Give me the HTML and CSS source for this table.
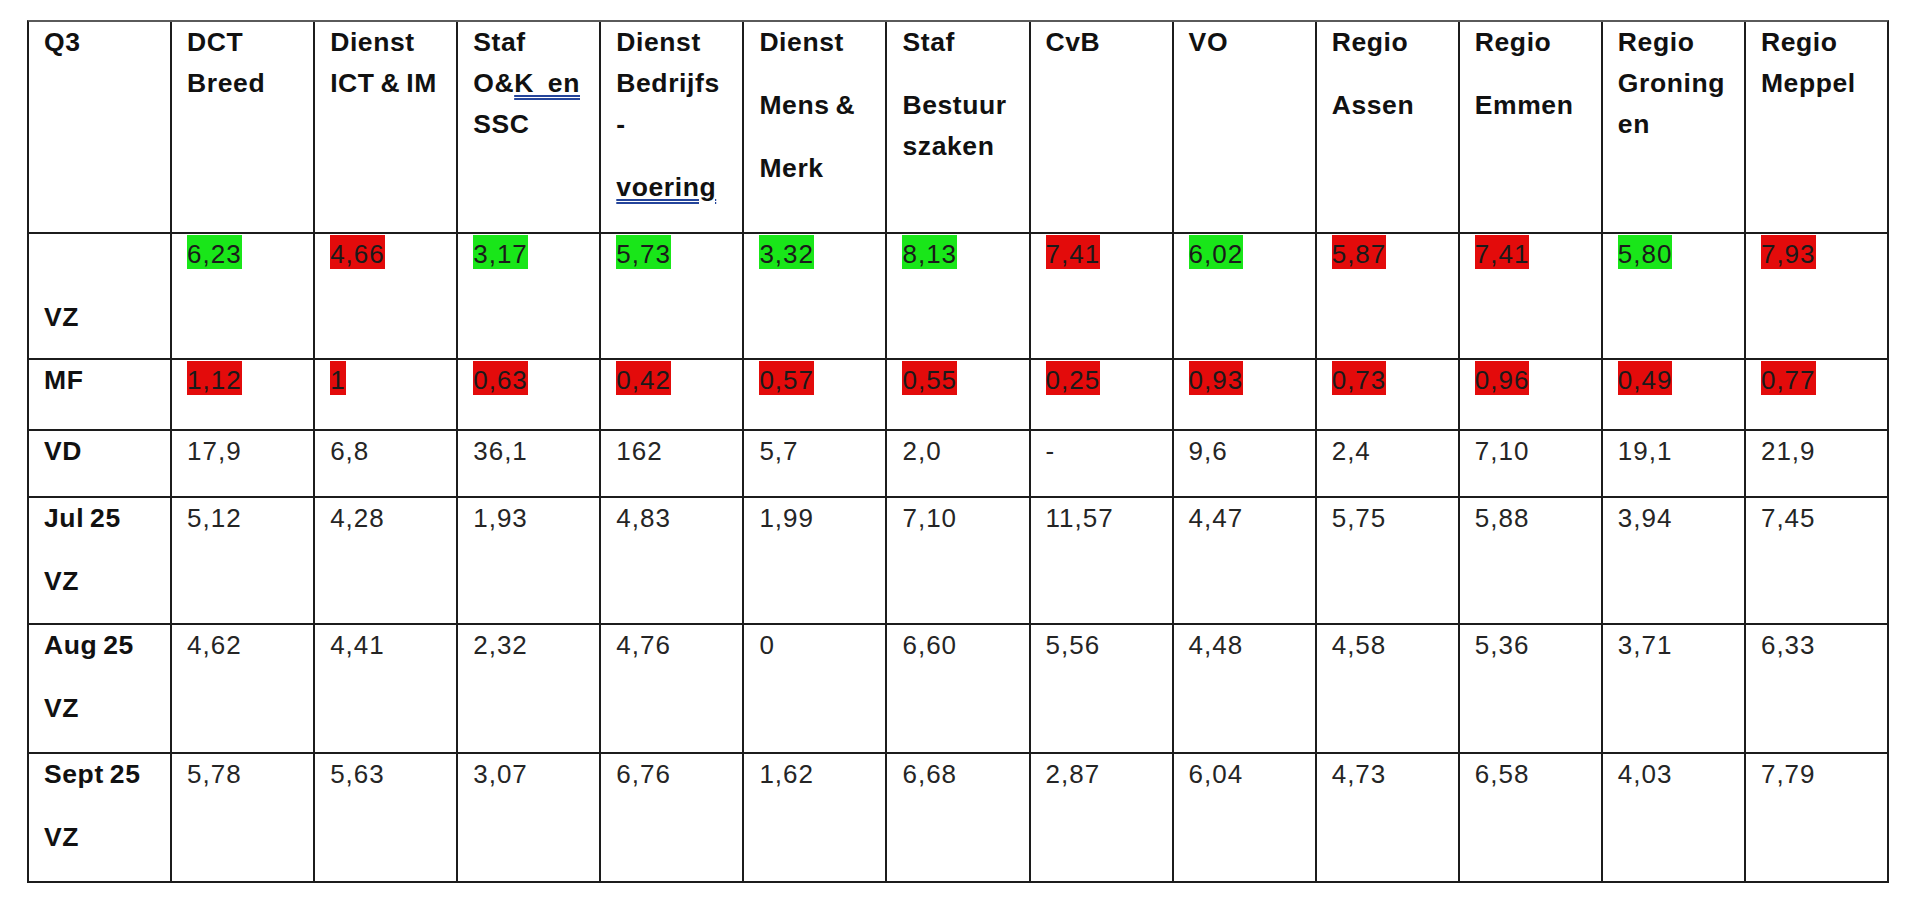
FILE: index.html
```html
<!DOCTYPE html>
<html lang="nl">
<head>
<meta charset="utf-8">
<title>Q3 overzicht</title>
<link rel="stylesheet" href="styles.css">
</head>
<body>
<div class="sheet">
  <!-- header row -->
  <div class="c h"><p>Q3</p></div>
  <div class="c h"><p>DCT<br>Breed</p></div>
  <div class="c h"><p>Dienst<br>ICT &amp; IM</p></div>
  <div class="c h"><p>Staf<br>O&amp;<u class="wide">K en</u><br>SSC</p></div>
  <div class="c h"><p>Dienst<br>Bedrijfs<br>-</p><p><u>voering</u></p></div>
  <div class="c h"><p>Dienst</p><p>Mens &amp;</p><p>Merk</p></div>
  <div class="c h"><p>Staf</p><p>Bestuur<br>szaken</p></div>
  <div class="c h"><p>CvB</p></div>
  <div class="c h"><p>VO</p></div>
  <div class="c h"><p>Regio</p><p>Assen</p></div>
  <div class="c h"><p>Regio</p><p>Emmen</p></div>
  <div class="c h"><p>Regio<br>Groning<br>en</p></div>
  <div class="c h"><p>Regio<br>Meppel</p></div>

  <!-- VZ row -->
  <div class="c h"><p>&nbsp;</p><p>VZ</p></div>
  <div class="c"><p><span class="hl g">6,23</span></p></div>
  <div class="c"><p><span class="hl r">4,66</span></p></div>
  <div class="c"><p><span class="hl g">3,17</span></p></div>
  <div class="c"><p><span class="hl g">5,73</span></p></div>
  <div class="c"><p><span class="hl g">3,32</span></p></div>
  <div class="c"><p><span class="hl g">8,13</span></p></div>
  <div class="c"><p><span class="hl r">7,41</span></p></div>
  <div class="c"><p><span class="hl g">6,02</span></p></div>
  <div class="c"><p><span class="hl r">5,87</span></p></div>
  <div class="c"><p><span class="hl r">7,41</span></p></div>
  <div class="c"><p><span class="hl g">5,80</span></p></div>
  <div class="c"><p><span class="hl r">7,93</span></p></div>

  <!-- MF row -->
  <div class="c h"><p>MF</p></div>
  <div class="c"><p><span class="hl r">1,12</span></p></div>
  <div class="c"><p><span class="hl r">1</span></p></div>
  <div class="c"><p><span class="hl r">0,63</span></p></div>
  <div class="c"><p><span class="hl r">0,42</span></p></div>
  <div class="c"><p><span class="hl r">0,57</span></p></div>
  <div class="c"><p><span class="hl r">0,55</span></p></div>
  <div class="c"><p><span class="hl r">0,25</span></p></div>
  <div class="c"><p><span class="hl r">0,93</span></p></div>
  <div class="c"><p><span class="hl r">0,73</span></p></div>
  <div class="c"><p><span class="hl r">0,96</span></p></div>
  <div class="c"><p><span class="hl r">0,49</span></p></div>
  <div class="c"><p><span class="hl r">0,77</span></p></div>

  <!-- VD row -->
  <div class="c h"><p>VD</p></div>
  <div class="c"><p>17,9</p></div>
  <div class="c"><p>6,8</p></div>
  <div class="c"><p>36,1</p></div>
  <div class="c"><p>162</p></div>
  <div class="c"><p>5,7</p></div>
  <div class="c"><p>2,0</p></div>
  <div class="c"><p>-</p></div>
  <div class="c"><p>9,6</p></div>
  <div class="c"><p>2,4</p></div>
  <div class="c"><p>7,10</p></div>
  <div class="c"><p>19,1</p></div>
  <div class="c"><p>21,9</p></div>

  <!-- Jul 25 row -->
  <div class="c h"><p>Jul 25</p><p>VZ</p></div>
  <div class="c"><p>5,12</p></div>
  <div class="c"><p>4,28</p></div>
  <div class="c"><p>1,93</p></div>
  <div class="c"><p>4,83</p></div>
  <div class="c"><p>1,99</p></div>
  <div class="c"><p>7,10</p></div>
  <div class="c"><p>11,57</p></div>
  <div class="c"><p>4,47</p></div>
  <div class="c"><p>5,75</p></div>
  <div class="c"><p>5,88</p></div>
  <div class="c"><p>3,94</p></div>
  <div class="c"><p>7,45</p></div>

  <!-- Aug 25 row -->
  <div class="c h"><p>Aug 25</p><p>VZ</p></div>
  <div class="c"><p>4,62</p></div>
  <div class="c"><p>4,41</p></div>
  <div class="c"><p>2,32</p></div>
  <div class="c"><p>4,76</p></div>
  <div class="c"><p>0</p></div>
  <div class="c"><p>6,60</p></div>
  <div class="c"><p>5,56</p></div>
  <div class="c"><p>4,48</p></div>
  <div class="c"><p>4,58</p></div>
  <div class="c"><p>5,36</p></div>
  <div class="c"><p>3,71</p></div>
  <div class="c"><p>6,33</p></div>

  <!-- Sept 25 row -->
  <div class="c h"><p>Sept 25</p><p>VZ</p></div>
  <div class="c"><p>5,78</p></div>
  <div class="c"><p>5,63</p></div>
  <div class="c"><p>3,07</p></div>
  <div class="c"><p>6,76</p></div>
  <div class="c"><p>1,62</p></div>
  <div class="c"><p>6,68</p></div>
  <div class="c"><p>2,87</p></div>
  <div class="c"><p>6,04</p></div>
  <div class="c"><p>4,73</p></div>
  <div class="c"><p>6,58</p></div>
  <div class="c"><p>4,03</p></div>
  <div class="c"><p>7,79</p></div>
</div>
</body>
</html>
```

FILE: styles.css
```css
html, body {
  margin: 0;
  padding: 0;
  background: #ffffff;
}

body {
  font-family: "Liberation Sans", Arial, sans-serif;
}

.sheet {
  box-sizing: border-box;
  margin: 20px 0 0 27px;
  width: 1862px;
  display: grid;
  grid-template-columns: repeat(13, 1fr);
  grid-template-rows: 210px 124px 69px 65px 125px 127px 127px;
  gap: 2px;
  background: #1c1c1c;
  border: 2px solid #1c1c1c;
  border-top-color: #5a5a5a;
}

.c {
  background: #ffffff;
  padding: 0 8px 0 15px;
  font-size: 26px;
  letter-spacing: 1px;
  color: #252525;
  overflow: hidden;
}

.c p {
  margin: 0 0 22px 0;
  line-height: 41px;
  white-space: nowrap;
}

.h {
  font-weight: bold;
  font-size: 26.5px;
  letter-spacing: 0.6px;
  word-spacing: -2px;
  color: #111111;
}

.h u {
  text-decoration: underline double #24449a;
  text-decoration-thickness: 1.5px;
  text-underline-offset: 3px;
}

.h u.wide {
  word-spacing: 6px;
}

.hl {
  display: inline-block;
  line-height: 30px;
  padding-top: 4px;
  color: #1a1a1a;
}

.hl.g {
  background: #19e619;
}

.hl.r {
  background: #e30b0b;
}
```
